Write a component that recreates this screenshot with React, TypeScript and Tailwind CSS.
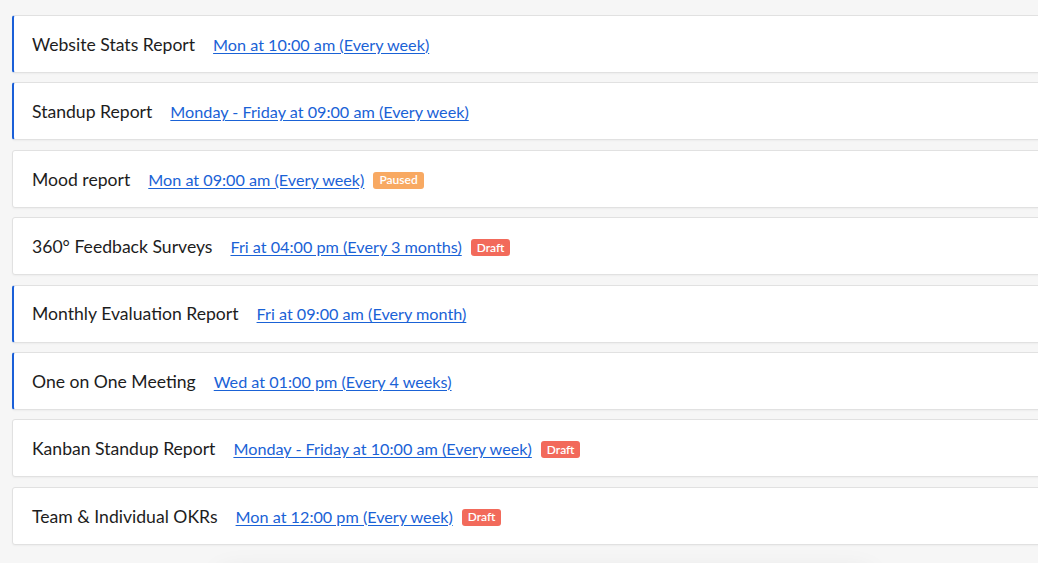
import React from 'react';

type Status = 'paused' | 'draft';

interface Report {
  title: string;
  schedule: string;
  active?: boolean;
  status?: Status;
}

const REPORTS: Report[] = [
  { title: 'Website Stats Report', schedule: 'Mon at 10:00 am (Every week)', active: true },
  { title: 'Standup Report', schedule: 'Monday - Friday at 09:00 am (Every week)', active: true },
  { title: 'Mood report', schedule: 'Mon at 09:00 am (Every week)', status: 'paused' },
  { title: '360° Feedback Surveys', schedule: 'Fri at 04:00 pm (Every 3 months)', status: 'draft' },
  { title: 'Monthly Evaluation Report', schedule: 'Fri at 09:00 am (Every month)', active: true },
  { title: 'One on One Meeting', schedule: 'Wed at 01:00 pm (Every 4 weeks)', active: true },
  { title: 'Kanban Standup Report', schedule: 'Monday - Friday at 10:00 am (Every week)', status: 'draft' },
  { title: 'Team & Individual OKRs', schedule: 'Mon at 12:00 pm (Every week)', status: 'draft' },
];

function StatusBadge({ status }: { status: Status }) {
  const paused = status === 'paused';
  return (
    <span
      className={
        paused
          ? 'ml-[9px] mt-[3px] inline-flex h-[17px] items-center rounded-[3px] bg-[#f8a962] px-[6px] text-[12px] font-semibold text-white'
          : 'ml-[9px] mt-[3px] inline-flex h-[17px] items-center rounded-[3px] bg-[#f26a5b] px-[6px] text-[12px] font-semibold text-white'
      }
    >
      {paused ? 'Paused' : 'Draft'}
    </span>
  );
}

function ReportRow({ report }: { report: Report }) {
  return (
    <div
      className={
        report.active
          ? 'flex h-[58px] items-center rounded-l-[3px] border border-l-2 border-[#e1e1e1] border-l-[#1a5fd8] bg-white pl-[18px] shadow-[0_1px_2px_rgba(0,0,0,0.04)]'
          : 'flex h-[58px] items-center rounded-l-[3px] border border-[#e1e1e1] bg-white pl-[19px] shadow-[0_1px_2px_rgba(0,0,0,0.04)]'
      }
    >
      <span className="mt-[2px] text-[17.6px] text-[#1d1d1d]">{report.title}</span>
      <a href="#" className="ml-[18px] mt-[2px] text-[16.2px] text-[#1a62d6] underline underline-offset-2">
        {report.schedule}
      </a>
      {report.status && <StatusBadge status={report.status} />}
    </div>
  );
}

export default function App() {
  return (
    <div className="relative h-[563px] w-[1038px] overflow-hidden bg-[#f6f6f6] font-['Lato',sans-serif]">
      <div className="flex w-[1040px] flex-col gap-[9.4px] pl-[12px] pt-[15px]">
        {REPORTS.map((r) => (
          <ReportRow key={r.title} report={r} />
        ))}
      </div>
      {/* shadow of a floating bar below the list */}
      <div className="absolute left-[220px] top-[580px] h-[30px] w-[650px] rounded-md bg-white shadow-[0_-6px_28px_rgba(0,0,0,0.10)]" />
    </div>
  );
}
